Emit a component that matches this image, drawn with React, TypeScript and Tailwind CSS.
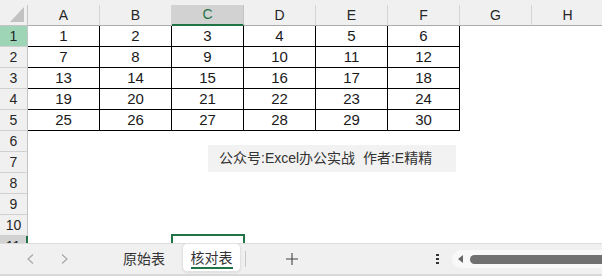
import React from "react";

const cols = ["A", "B", "C", "D", "E", "F", "G", "H"];
const green = "#217346";

const HeaderRow = () => (
  <div className="flex items-end h-[26px] bg-[#f0f0f0]">
    <div className="relative w-[28px] h-[21px] shrink-0 border-r border-b border-[#c4c4c4]">
      {/* corner triangle */}
      <svg className="absolute left-[10px] top-[2px]" width="14" height="15" viewBox="0 0 14 15">
        <polygon points="14,0 14,15 0,15" fill="#c2c2c2" />
      </svg>
    </div>
    {cols.map((c) =>
      c === "C" ? (
        <div
          key={c}
          className="w-[72px] h-[21px] shrink-0 flex items-center justify-center bg-[#d2d2d2] border-r border-[#c4c4c4] border-b-2 border-b-[#217346] text-[14px] text-[#217346]"
        >
          {c}
        </div>
      ) : (
        <div
          key={c}
          className="w-[72px] h-[21px] shrink-0 flex items-center justify-center border-r border-b border-r-[#d4d4d4] border-b-[#ababab] text-[14px] text-[#262626]"
        >
          {c}
        </div>
      )
    )}
  </div>
);

const Row = ({ n }: { n: number }) => {
  const rowHead =
    n === 1
      ? "bg-[#9fd5b7] border-r border-[#c4c4c4]"
      : n === 11
      ? "bg-[#d2d2d2] border-r-2 border-r-[#217346]"
      : "bg-[#f0f0f0] border-r border-[#c4c4c4]";
  return (
    <div className="flex h-[21px]">
      <div
        className={`w-[28px] h-full shrink-0 flex items-center justify-center border-b border-b-[#d0d0d0] text-[14px] text-[#262626] ${rowHead}`}
      >
        {n}
      </div>
      {cols.map((c, i) => {
        const inTable = n <= 5 && i < 6;
        return (
          <div
            key={c}
            className={`relative w-[72px] h-full shrink-0 flex items-center justify-center text-[15px] text-[#1a1a1a] ${
              inTable ? "border-r border-b border-black" : ""
            }`}
          >
            {inTable ? (n - 1) * 6 + i + 1 : null}
            {n === 11 && c === "C" && (
              <div className="absolute -top-[2px] -left-px w-[74px] h-[24px] border-2 border-[#217346]" />
            )}
          </div>
        );
      })}
    </div>
  );
};

const TabBar = () => (
  <div className="h-[33px] shrink-0 flex items-center bg-[#f0f0f0] border-t border-[#dcdcdc] border-b-2 border-b-[#d8d8d8]">
    <div className="flex items-center w-[110px] h-full pl-[27px] gap-[27px]">
      <svg width="7" height="10" viewBox="0 0 7 10">
        <polyline points="6,0.5 1,5 6,9.5" fill="none" stroke="#a8a8a8" strokeWidth="1.2" />
      </svg>
      <svg width="7" height="10" viewBox="0 0 7 10">
        <polyline points="1,0.5 6,5 1,9.5" fill="none" stroke="#a8a8a8" strokeWidth="1.2" />
      </svg>
    </div>
    <div className="w-[68px] flex justify-center text-[14px] text-[#333]">原始表</div>
    <div className="ml-[4px] self-start -mt-px w-[59px] h-[29px] flex flex-col items-center pt-[6px] bg-white rounded-[5px] border border-[#e2e2e2] shadow-[0_1px_2px_rgba(0,0,0,0.08)]">
      <span className="text-[14px] leading-[16px] text-[#333]">核对表</span>
      <span className="mt-[1px] w-[42px] h-[2px] bg-[#217346]" />
    </div>
    <div className="ml-[4px] w-px h-[16px] bg-[#c8c8c8]" />
    <svg className="ml-[40px]" width="12" height="12" viewBox="0 0 12 12">
      <path d="M6 0V12M0 6H12" stroke="#444" strokeWidth="1.1" />
    </svg>
    <div className="ml-[138px] flex flex-col gap-[2px]">
      <span className="w-[3px] h-[2px] bg-[#333]" />
      <span className="w-[3px] h-[2px] bg-[#333]" />
      <span className="w-[3px] h-[2px] bg-[#333]" />
    </div>
    <div className="ml-[13px] flex-1 h-[18px] rounded-l-full bg-[#f8f8f8] flex items-center pl-[6px]">
      <svg width="5" height="8" viewBox="0 0 5 8">
        <polygon points="5,0 5,8 0,4" fill="#666" />
      </svg>
      <div className="ml-[7px] flex-1 h-[9px] rounded-l-full bg-[#707070]" />
    </div>
  </div>
);

export default function App() {
  return (
    <div className="w-[602px] h-[276px] overflow-hidden bg-white flex flex-col font-['Liberation_Sans','Noto_Sans_CJK_SC',sans-serif]">
      <div className="relative h-[243px] shrink-0 overflow-hidden">
        <HeaderRow />
        {Array.from({ length: 11 }, (_, i) => (
          <Row key={i} n={i + 1} />
        ))}
        {/* floating text box */}
        <div className="absolute left-[208px] top-[145px] w-[248px] h-[27px] bg-[#f2f2f2] flex items-center pl-[11px] text-[14px] text-[#333] whitespace-pre">
          公众号:Excel办公实战  作者:E精精
        </div>
      </div>
      <TabBar />
    </div>
  );
}
